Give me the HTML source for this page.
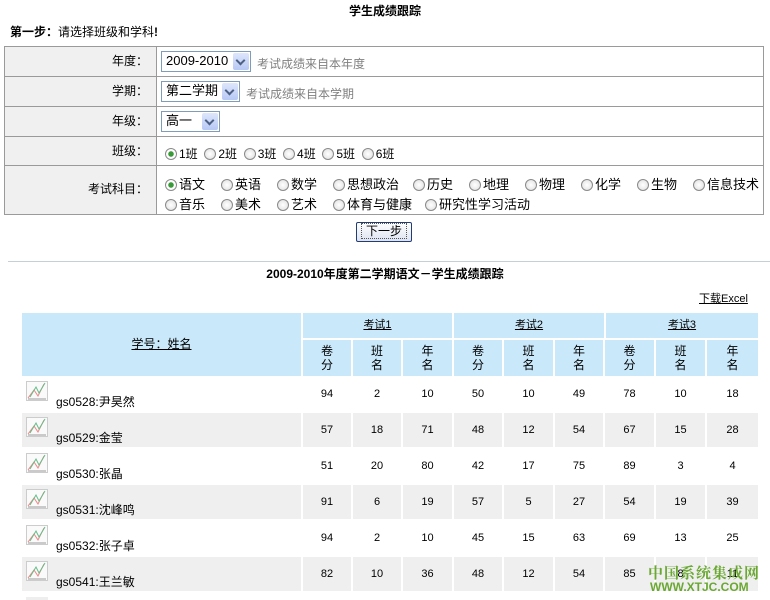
<!DOCTYPE html>
<html><head><meta charset="utf-8"><style>
*{margin:0;padding:0;box-sizing:border-box}
body{width:770px;height:600px;overflow:hidden;background:#fff;font:12px "Liberation Sans","Noto Sans CJK SC",sans-serif;color:#000;position:relative}
.a{position:absolute}
.lab{position:absolute;left:5px;width:151px;background:#f0f0f0;text-align:right;padding-right:8px;border-bottom:1px solid #9a9a9a}
.val{position:absolute;left:157px;width:606px;border-bottom:1px solid #9a9a9a}
.sel{position:absolute;height:21px;border:1px solid #7f9db9;background:#fff;font-size:13px;line-height:18px;padding:0 0 0 4px}
.sel i{position:absolute;right:1px;top:1px;width:16px;height:17px;background:linear-gradient(#dde6fb,#b7c8f4);border-radius:2px}
.sel i:after{content:"";position:absolute;left:4px;top:4px;width:5px;height:5px;border-right:2px solid #4d6185;border-bottom:2px solid #4d6185;transform:rotate(45deg)}
.gray{color:#808080}
.r{display:inline-block;width:12px;height:12px;border:1px solid #8a8a8a;border-radius:50%;vertical-align:-2px;margin-right:2px;background:radial-gradient(#fff,#ddd)}
.r.on{background:radial-gradient(#3a9a3a 0 2.5px,#fff 3px)}
.c{position:absolute;text-align:center;font-size:11px}
.hd{background:#c9e8fa}
.g{background:#efefef}
u{text-decoration:underline}
</style></head><body>
<div class="a" style="left:0;width:770px;top:2px;text-align:center;font-weight:bold;font-size:12px">学生成绩跟踪</div>
<div class="a" style="left:10px;top:23px"><b>第一步：</b>请选择班级和学科<b>!</b></div>
<div class="a" style="left:4px;top:46px;width:760px;height:169px;border:1px solid #9a9a9a"></div>
<div class="a" style="left:156px;top:46px;width:1px;height:169px;background:#9a9a9a"></div>
<div class="lab" style="top:47px;height:30px;line-height:29px">年度：</div>
<div class="lab" style="top:77px;height:30px;line-height:29px">学期：</div>
<div class="lab" style="top:107px;height:30px;line-height:29px">年级：</div>
<div class="lab" style="top:137px;height:29px;line-height:28px">班级：</div>
<div class="lab" style="top:166px;height:48px;line-height:46px;border:0">考试科目：</div>
<div class="val" style="top:47px;height:30px"></div>
<div class="val" style="top:77px;height:30px"></div>
<div class="val" style="top:107px;height:30px"></div>
<div class="val" style="top:137px;height:29px"></div>
<div class="sel" style="left:161px;top:51px;width:90px">2009-2010<i></i></div>
<div class="a gray" style="left:257px;top:55px">考试成绩来自本年度</div>
<div class="sel" style="left:161px;top:81px;width:79px">第二学期<i></i></div>
<div class="a gray" style="left:246px;top:85px">考试成绩来自本学期</div>
<div class="sel" style="left:161px;top:111px;width:59px">高一<i></i></div>
<div class="a" style="left:165px;top:145px;word-spacing:0"><span class="r on"></span>1班&nbsp;&nbsp;<span class="r"></span>2班&nbsp;&nbsp;<span class="r"></span>3班&nbsp;&nbsp;<span class="r"></span>4班&nbsp;&nbsp;<span class="r"></span>5班&nbsp;&nbsp;<span class="r"></span>6班</div>
<div class="a" style="left:165px;top:174px;font-size:13px;white-space:nowrap">
<span class="a" style="left:0"><span class="r on"></span>语文</span><span class="a" style="left:56px"><span class="r"></span>英语</span><span class="a" style="left:112px"><span class="r"></span>数学</span><span class="a" style="left:168px"><span class="r"></span>思想政治</span><span class="a" style="left:248px"><span class="r"></span>历史</span><span class="a" style="left:304px"><span class="r"></span>地理</span><span class="a" style="left:360px"><span class="r"></span>物理</span><span class="a" style="left:416px"><span class="r"></span>化学</span><span class="a" style="left:472px"><span class="r"></span>生物</span><span class="a" style="left:528px"><span class="r"></span>信息技术</span>
<span class="a" style="left:0;top:20px"><span class="r"></span>音乐</span><span class="a" style="left:56px;top:20px"><span class="r"></span>美术</span><span class="a" style="left:112px;top:20px"><span class="r"></span>艺术</span><span class="a" style="left:168px;top:20px"><span class="r"></span>体育与健康</span><span class="a" style="left:260px;top:20px"><span class="r"></span>研究性学习活动</span></div>
<div class="a" style="left:356px;top:222px;width:56px;height:20px;border:1px solid #243c74;border-radius:2px;background:linear-gradient(#fff,#dde4f0);text-align:center;line-height:17px"><span style="border:1px dotted #555;padding:0 4px">下一步</span></div>
<div class="a" style="left:8px;top:261px;width:762px;height:1px;background:#c4cfd8"></div>
<div class="a" style="left:0;width:770px;top:265px;text-align:center;font-weight:bold">2009-2010年度第二学期语文－学生成绩跟踪</div>
<div class="a" style="left:699px;top:290px;font-size:11px"><u>下载Excel</u></div>
<div class="hd a" style="left:22px;top:313px;width:279px;height:63px"></div>
<div class="a" style="left:22px;top:335px;width:279px;text-align:center"><u>学号：姓名</u></div>
<div class="hd a c" style="left:303px;top:313px;width:149px;height:25px;line-height:24px"><u>考试1</u></div>
<div class="hd a c" style="left:454px;top:313px;width:150px;height:25px;line-height:24px"><u>考试2</u></div>
<div class="hd a c" style="left:606px;top:313px;width:152px;height:25px;line-height:24px"><u>考试3</u></div>
<div id="t"></div>
<div class="a" style="left:648px;top:562px;color:#6aa832;font-weight:bold;font-size:15px;letter-spacing:1px;white-space:nowrap;font-family:'Noto Serif CJK SC',serif">中国系统集成网</div>
<div class="a" style="left:650px;top:580px;color:#6aa832;font-weight:bold;font-size:12px;white-space:nowrap;font-family:'Liberation Sans',sans-serif">WWW.XTJC.COM</div>
<script>
var xs=[303,353,403,454,504,555,605,656,707],ws=[48,48,49,48,49,48,49,49,51];
var h='',lb=['卷<br>分','班<br>名','年<br>名'];
for(var i=0;i<9;i++)h+='<div class="hd a c" style="left:'+xs[i]+'px;top:340px;width:'+ws[i]+'px;height:36px;padding-top:4px;font-size:12px;line-height:14px">'+lb[i%3]+'</div>';
var rows=[['gs0528:尹昊然',94,2,10,50,10,49,78,10,18],['gs0529:金莹',57,18,71,48,12,54,67,15,28],['gs0530:张晶',51,20,80,42,17,75,89,3,4],['gs0531:沈峰鸣',91,6,19,57,5,27,54,19,39],['gs0532:张子卓',94,2,10,45,15,63,69,13,25],['gs0541:王兰敏',82,10,36,48,12,54,85,8,11]];
var ys=[377,413,449,485,521,557];
for(var r=0;r<6;r++){var y=ys[r],g=r%2?' g':'';
h+='<div class="a'+g+'" style="left:22px;top:'+y+'px;width:279px;height:34px"></div>';
h+='<svg class="a" style="left:26px;top:'+(y+4)+'px" width="22" height="20"><rect x="0.5" y="0.5" width="21" height="19" fill="#fafafa" stroke="#ccc"/><path d="M2 17L8 9L12 15L18 3" stroke="#e88" fill="none"/><path d="M4 16L10 6L13 12L19 2" stroke="#6b8" fill="none"/><path d="M2 18H20" stroke="#999"/></svg>';
h+='<div class="a" style="left:56px;top:'+(y+16)+'px;font-size:12px">'+rows[r][0]+'</div>';
for(var i=0;i<9;i++)h+='<div class="a c'+g+'" style="left:'+xs[i]+'px;top:'+y+'px;width:'+ws[i]+'px;height:34px;line-height:34px">'+rows[r][i+1]+'</div>';}
h+='<svg class="a" style="left:26px;top:597px" width="22" height="3"><rect width="22" height="3" fill="#eee"/></svg>';
document.getElementById('t').innerHTML=h;
</script>
</body></html>
